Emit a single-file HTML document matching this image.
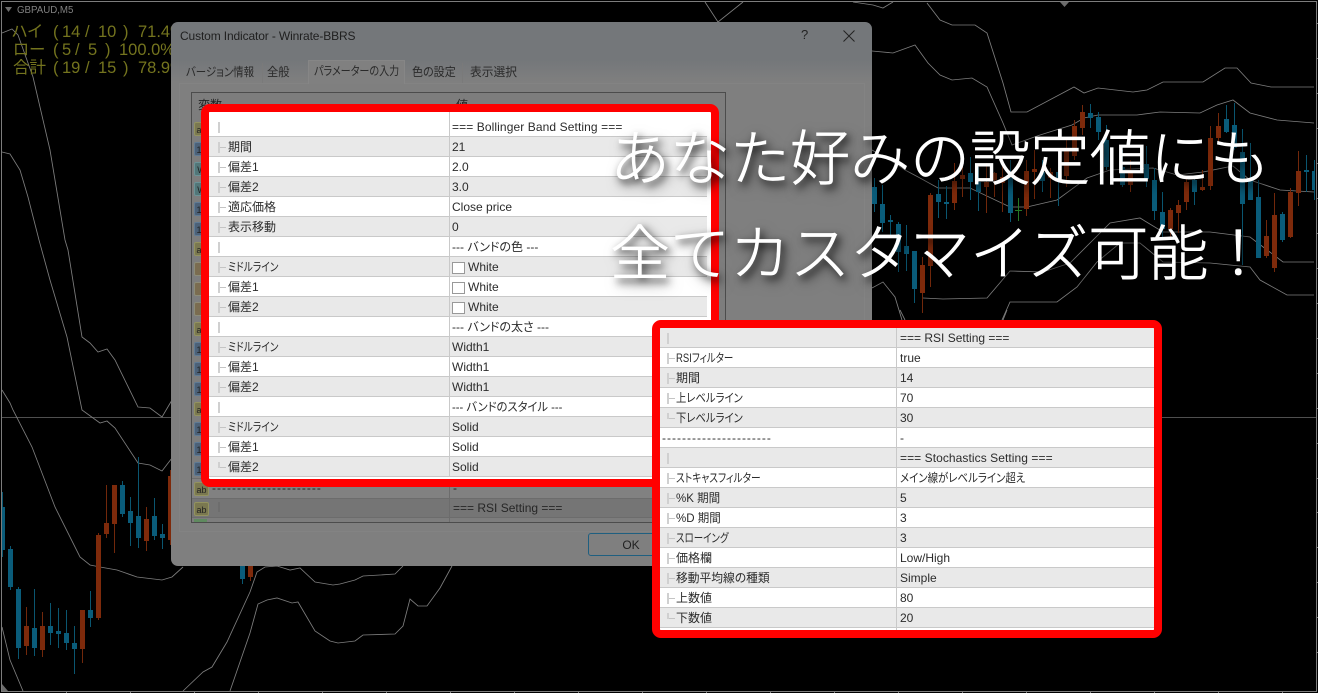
<!DOCTYPE html>
<html lang="ja"><head><meta charset="utf-8"><title>Winrate-BBRS</title>
<style>
html,body{margin:0;padding:0;background:#000;}
body{width:1318px;height:693px;position:relative;overflow:hidden;font-family:"Liberation Sans","Noto Sans CJK JP",sans-serif;font-feature-settings:"palt";}
svg{position:absolute;left:0;top:0;}
.a{position:absolute;white-space:nowrap;}
#dlg{position:absolute;left:171px;top:22px;width:701px;height:544px;border-radius:7px;background:linear-gradient(#74777a 0,#74777a 38px,#7f7f7f 60px);overflow:hidden;}
#panel{position:absolute;left:8px;top:61px;width:686px;height:449px;background:#7f7f7f;border:1px solid #838383;box-sizing:border-box;}
.tab{position:absolute;top:42px;font-size:12px;line-height:16px;color:#2a2a2a;white-space:nowrap;transform-origin:0 0;}
#atab{position:absolute;left:137px;top:38px;width:97px;height:24px;background:#808080;border:1px solid #868686;border-bottom:0;box-sizing:border-box;}
#tbl{position:absolute;left:20px;top:70px;width:535px;height:431px;background:#7d7d7d;border:1px solid #4c4c4c;box-sizing:border-box;overflow:hidden;}
.ic{position:absolute;left:2px;width:15px;height:14px;border-radius:2px;font-size:9px;line-height:14px;text-align:center;color:#222;box-sizing:border-box;}
.ab{background:#7a7850;border:1px solid #92925e;}
.n{background:#4c6178;border:1px solid #5f7a94;}
.w{background:#527678;border:1px solid #6a9296;}
.c{background:#7a6c50;border:1px solid #8c8c78;}
.box{position:absolute;background:#fff;border:8px solid #f00;border-radius:9px;box-sizing:border-box;overflow:hidden;}
.r{position:relative;height:20px;box-sizing:border-box;border-bottom:1px solid #c9c9c9;background:#fff;font-size:12px;line-height:21px;color:#2b2b2b;}
.g{background:#e9e9e9;}
.r b{font-weight:400;position:absolute;top:0;white-space:nowrap;transform-origin:0 0;}
.r i{position:absolute;top:0;bottom:-1px;width:1px;background:#c9c9c9;}
.r u{position:absolute;top:5px;height:11px;width:2px;background:#d0d0d0;}
.r s{position:absolute;top:10px;height:1px;width:6px;background:#c4c4c4;}
.r em{position:absolute;top:5px;width:13px;height:12px;background:#fff;border:1px solid #999;box-sizing:border-box;}
#b1 .r{width:498px;}
#b1 i{left:240px;}
#b1 .v{left:243px;}
#b1 .l{left:19px;}
#b1 u{left:9px;}
#b1 s{left:11px;}
#b2 i{left:236px;}
#b2 .v{left:240px;}
#b2 .l{left:16px;}
#b2 u{left:7px;}
#b2 s{left:9px;}
.big{position:absolute;left:610px;color:#fff;font-size:60px;line-height:70px;font-weight:300;white-space:nowrap;font-feature-settings:"palt" 0;-webkit-text-stroke:.7px #fff;text-shadow:3px 4px 8px rgba(0,0,0,.85),4px 6px 14px rgba(0,0,0,.55);font-family:"Noto Sans CJK JP",sans-serif;}
</style></head><body>

<svg width="1318" height="693" viewBox="0 0 1318 693">
<rect x="1.5" y="1.5" width="1315" height="690" fill="none" stroke="#7c7c7c"/>
<path d="M2 417.500H1316" stroke="#4f4f4f"/>
<path d="M1316 338.500h2M1316 373.500h2M1316 408.500h2M1316 443.500h2M1316 478.500h2M1316 512.500h2M1316 547.500h2M1316 582.500h2M1316 617.500h2M1316 652.500h2M1316 303.500h2M1316 268.500h2M1316 233.500h2M1316 198.500h2M1316 163.500h2M1316 128.500h2M1316 93.500h2M1316 58.500h2M1316 23.500h2M194.500 691v2M258.500 691v2M322.500 691v2M386.500 691v2M450.500 691v2M514.500 691v2M578.500 691v2M642.500 691v2M706.500 691v2M770.500 691v2M834.500 691v2M898.500 691v2M962.500 691v2M1026.500 691v2M1090.500 691v2M1154.500 691v2M1218.500 691v2M1282.500 691v2M66.500 691v2M130.500 691v2" stroke="#7c7c7c" fill="none"/>
<path d="M2 684l6 7H2zM1060 2h9l-4.500 5zM5 7h7l-3.500 5z" fill="#6c6c6c"/>

<g fill="none" stroke="#7e7e7e" stroke-width=".85">
<polyline points="2,33 12,29 18,35 33,77 50,150 65,240 68,250 82,337 90,343 98,352 107,349 115,360 138,407 150,408 162,417 172,400"/>
<polyline points="2,152 10,154 20,170 28,197 39,240 50,280 67,337 82,410 100,423 107,421 115,428 138,463 150,465 162,471 172,458"/>
<polyline points="2,390 10,403 13,410 32,447 55,507 80,557 90,565 100,567 117,570 137,577 162,580 172,577 183,567"/>
<polyline points="2,627 10,660 23,691"/>
<polyline points="183,691 203,672 212,667 227,642 250,592 257,572 265,567 277,566 290,570 300,568 315,582 333,585 340,584 355,580 363,576 380,575 395,574 403,566"/>
<polyline points="230,691 250,633 258,604 267,600 277,598 292,603 298,602 315,631 330,641 338,643 355,641 363,635 395,634 403,626 410,599 418,606 427,606 440,588 452,566"/>
<polyline points="705,2 718,22 743,2"/>
<polyline points="853,2 873,5 883,8 893,2"/>
<polyline points="927,3 940,20 952,25 975,25 987,33 1003,83 1011,112 1027,112 1074,87 1084,93 1098,88 1133,92 1147,90 1163,82 1203,82 1225,68 1237,68 1251,83 1271,87 1314,87"/>
<polyline points="872,51 893,53 915,45 928,63 940,75 952,80 972,78 987,87 1003,123 1012,145 1040,135 1072,125 1084,118 1098,115 1137,115 1160,112 1200,113 1217,105 1233,100 1250,113 1277,120 1314,123"/>
<polyline points="872,150 890,160 905,170 920,178 938,188 970,188 1010,207 1027,207 1057,200 1087,178 1110,170 1153,168 1177,175 1203,172 1233,166 1250,180 1280,190 1314,192"/>
<polyline points="923,298 943,299 987,298 1010,271 1043,272 1070,263 1103,230 1110,223 1140,218 1163,232 1210,232 1250,237 1283,262 1314,262"/>
<polyline points="1002,320 1010,302 1057,302 1077,287 1097,262 1120,243 1140,243 1163,262 1210,263 1250,267 1260,280 1287,295 1314,295"/>
<polyline points="872,288 883,282 895,297 902,320"/>
<polyline points="1003,320 1007,310"/>
<polyline points="900,310 905,320"/>
</g>

<path stroke="#0a5670" fill="none" d="M2.500 492V557M10.500 546V590M18.500 587V659M34.500 589V656M50.500 603V645M58.500 608V648M66.500 610V650M74.500 626V674M90.500 591V627M122.500 481V517M130.500 497V546M138.500 457V548M154.500 498V540M162.500 524V549M242.500 560V584M874.500 178V212M882.500 185V232M890.500 215V237M898.500 222V272M906.500 225V271M914.500 251V303M938.500 180V218M946.500 186V219M970.500 157V200M978.500 167V211M1010.500 160V222M1042.500 160V192M1058.500 167V206M1090.500 104V128M1098.500 112V140M1106.500 125V170M1122.500 150V187M1146.500 146V187M1154.500 168V220M1162.500 192V237M1194.500 178V205M1226.500 105V133M1234.500 103V150M1242.500 129V265M1250.500 143V200M1258.500 180V258M1282.500 212V242M1306.500 155V192M1314.500 160V200"/>
<path fill="#0a5c7a" d="M2 507h3v43h-3zM8 549h5v38h-5zM16 589h5v59h-5zM32 628h5v20h-5zM48 626h5v7h-5zM56 631h5v3h-5zM64 633h5v10h-5zM72 643h5v6h-5zM88 610h5v8h-5zM120 485h5v29h-5zM128 511h5v12h-5zM136 516h5v22h-5zM152 516h5v20h-5zM160 534h5v4h-5zM240 560h5v19h-5zM872 187h5v17h-5zM880 204h5v19h-5zM888 220h5v2h-5zM896 224h5v28h-5zM904 246h5v8h-5zM912 251h5v38h-5zM936 194h5v8h-5zM944 202h5v2h-5zM968 173h5v9h-5zM976 182h5v10h-5zM1008 178h5v35h-5zM1040 172h5v9h-5zM1056 172h5v6h-5zM1088 113h5v5h-5zM1096 117h5v15h-5zM1104 140h5v27h-5zM1120 167h5v18h-5zM1144 164h5v15h-5zM1152 180h5v31h-5zM1160 212h5v17h-5zM1192 180h5v12h-5zM1224 119h5v13h-5zM1232 125h5v23h-5zM1240 152h5v52h-5zM1248 180h5v20h-5zM1256 197h5v61h-5zM1280 214h5v26h-5zM1304 170h5v2h-5zM1312 171h3v19h-3z"/>
<path stroke="#72280b" fill="none" d="M26.500 607V655M42.500 612V657M82.500 610V663M98.500 533V620M106.500 485V538M114.500 485V553M146.500 507V551M170.500 470V545M250.500 560V581M922.500 257V313M930.500 193V287M954.500 163V210M962.500 158V197M986.500 163V213M994.500 172V197M1002.500 162V212M1026.500 160V216M1034.500 150V199M1050.500 168V198M1066.500 140V187M1074.500 120V160M1082.500 105V135M1130.500 160V192M1170.500 208V240M1178.500 200V233M1186.500 178V210M1202.500 170V191M1210.500 126V190M1218.500 113V143M1266.500 220V258M1274.500 193V272M1290.500 188V238M1298.500 151V206"/>
<path fill="#7e2a0b" d="M24 626h5v20h-5zM40 626h5v24h-5zM80 610h5v39h-5zM96 535h5v83h-5zM104 523h5v11h-5zM112 485h5v39h-5zM144 519h5v22h-5zM168 476h5v64h-5zM248 560h5v17h-5zM920 265h5v28h-5zM928 195h5v71h-5zM952 181h5v22h-5zM960 175h5v4h-5zM984 182h5v5h-5zM992 173h5v7h-5zM1000 177h5v6h-5zM1024 171h5v38h-5zM1032 169h5v3h-5zM1048 172h5v6h-5zM1064 150h5v26h-5zM1072 126h5v30h-5zM1080 112h5v16h-5zM1128 173h5v12h-5zM1168 210h5v19h-5zM1176 205h5v8h-5zM1184 182h5v20h-5zM1200 187h5v3h-5zM1208 138h5v48h-5zM1216 126h5v12h-5zM1264 236h5v20h-5zM1272 215h5v53h-5zM1288 192h5v45h-5zM1296 171h5v22h-5z"/>
<path stroke="#257a25" fill="none" d="M1018.500 198V221M1015 210.500h7"/>

<text x="17" y="13" font-size="9.700" fill="#808080" font-family="Liberation Sans">GBPAUD,M5</text>
<g font-size="16.500" fill="#74741e" font-family="Liberation Sans,Noto Sans CJK JP,sans-serif" style="font-feature-settings:'palt'">
<text x="12" y="37">ハイ</text><text x="53" y="37">(</text><text x="62" y="37">14</text><text x="85" y="37">/</text><text x="98" y="37">10</text><text x="123" y="37">)</text><text x="138" y="37">71.4%</text>
<text x="13" y="55">ロー</text><text x="53" y="55">(</text><text x="62" y="55">5</text><text x="75" y="55">/</text><text x="88" y="55">5</text><text x="105" y="55">)</text><text x="119" y="55">100.0%</text>
<text x="13" y="73">合計</text><text x="53" y="73">(</text><text x="62" y="73">19</text><text x="85" y="73">/</text><text x="98" y="73">15</text><text x="123" y="73">)</text><text x="138" y="73">78.9%</text>
</g>
</svg>

<div id="dlg">
<div class="a" style="left:9px;top:7px;font-size:12px;line-height:15px;color:#1f1f1f;letter-spacing:-.13px;">Custom Indicator - Winrate-BBRS</div>
<div class="a" style="left:630px;top:5px;font-size:13px;line-height:16px;color:#222;">?</div>
<svg style="left:671px;top:7px" width="14" height="14"><path d="M1.500 1.500L12.500 12.500M12.500 1.500L1.500 12.500" stroke="#222" stroke-width="1" fill="none"/></svg>
<div id="panel"></div>
<div id="atab"></div>
<div class="tab" style="left:15px;transform:scaleX(.87)">バージョン情報</div>
<div class="tab" style="left:96px;transform:scaleX(.94)">全般</div>
<div class="tab" style="left:143px;top:41px;transform:scaleX(.84)">パラメーターの入力</div>
<div class="tab" style="left:241px;transform:scaleX(.92)">色の設定</div>
<div class="tab" style="left:299px;transform:scaleX(.98)">表示選択</div>
<div class="a" style="left:91px;top:41px;width:1px;height:20px;background:#7a7a7a"></div>
<div class="a" style="left:291px;top:41px;width:1px;height:20px;background:#7a7a7a"></div>
<div id="tbl">
<div class="a" style="left:6px;top:4px;font-size:12px;line-height:16px;color:#222;">変数</div>
<div class="a" style="left:264px;top:4px;font-size:12px;line-height:16px;color:#222;">値</div>
<div class="a" style="left:0;top:385px;width:533px;height:20px;background:#818181;border-top:1px solid #6c6c6c;box-sizing:border-box;"></div>
<div class="a" style="left:0;top:405px;width:533px;height:20px;background:#757575;border-top:1px solid #6c6c6c;border-bottom:1px solid #6c6c6c;box-sizing:border-box;"></div>
<div class="a" style="left:257px;top:385px;width:1px;height:45px;background:#6c6c6c;"></div>
<div class="a" style="left:20px;top:387px;font-size:12px;line-height:16px;color:#222;letter-spacing:1px;">----------------------</div>
<div class="a" style="left:261px;top:387px;font-size:12px;line-height:16px;color:#222;">-</div>
<div class="a" style="left:261px;top:407px;font-size:12px;line-height:16px;color:#262626;">=== RSI Setting ===</div>
<div class="a" style="left:26px;top:409px;width:2px;height:10px;background:#6d6d6d;"></div>
<div class="ic ab" style="top:29px">ab</div>
<div class="ic n" style="top:49px">12</div>
<div class="ic w" style="top:69px">W</div>
<div class="ic w" style="top:89px">W</div>
<div class="ic n" style="top:109px">12</div>
<div class="ic n" style="top:129px">12</div>
<div class="ic ab" style="top:149px">ab</div>
<div class="ic c" style="top:169px"></div>
<div class="ic c" style="top:189px"></div>
<div class="ic c" style="top:209px"></div>
<div class="ic ab" style="top:229px">ab</div>
<div class="ic n" style="top:249px">12</div>
<div class="ic n" style="top:269px">12</div>
<div class="ic n" style="top:289px">12</div>
<div class="ic ab" style="top:309px">ab</div>
<div class="ic n" style="top:329px">12</div>
<div class="ic n" style="top:349px">12</div>
<div class="ic n" style="top:369px">12</div>
<div class="ic ab" style="top:389px">ab</div>
<div class="ic ab" style="top:409px">ab</div>
<div class="a" style="left:2px;top:426px;width:13px;height:3px;background:#5f8a5f;"></div>
</div>
<div class="a" style="left:417px;top:511px;width:86px;height:23px;border:1px solid #1f5f80;border-radius:3px;box-sizing:border-box;background:#7f7f7f;text-align:center;font-size:12px;line-height:22px;color:#222;">OK</div>
</div>

<div class="box" id="b1" style="left:201px;top:104px;width:518px;height:383px;">
<div class="r" style="height:25px;line-height:31px;"><i></i><u style="top:10px"></u><b class="v" style="letter-spacing:.1px">=== Bollinger Band Setting ===</b></div>
<div class="r g"><i></i><u></u><s></s><b class="l">期間</b><b class="v">21</b></div>
<div class="r"><i></i><u></u><s></s><b class="l">偏差1</b><b class="v">2.0</b></div>
<div class="r g"><i></i><u></u><s></s><b class="l">偏差2</b><b class="v">3.0</b></div>
<div class="r"><i></i><u></u><s></s><b class="l">適応価格</b><b class="v">Close price</b></div>
<div class="r g"><i></i><u></u><s></s><b class="l">表示移動</b><b class="v">0</b></div>
<div class="r"><i></i><u></u><b class="v">--- バンドの色 ---</b></div>
<div class="r g"><i></i><u></u><s></s><b class="l" style="transform:scaleX(.81)">ミドルライン</b><em style="left:243px"></em><b style="left:259px">White</b></div>
<div class="r"><i></i><u></u><s></s><b class="l">偏差1</b><em style="left:243px"></em><b style="left:259px">White</b></div>
<div class="r g"><i></i><u></u><s></s><b class="l">偏差2</b><em style="left:243px"></em><b style="left:259px">White</b></div>
<div class="r"><i></i><u></u><b class="v">--- バンドの太さ ---</b></div>
<div class="r g"><i></i><u></u><s></s><b class="l" style="transform:scaleX(.81)">ミドルライン</b><b class="v">Width1</b></div>
<div class="r"><i></i><u></u><s></s><b class="l">偏差1</b><b class="v">Width1</b></div>
<div class="r g"><i></i><u></u><s></s><b class="l">偏差2</b><b class="v">Width1</b></div>
<div class="r"><i></i><u></u><b class="v" style="transform:scaleX(.94)">--- バンドのスタイル ---</b></div>
<div class="r g"><i></i><u></u><s></s><b class="l" style="transform:scaleX(.81)">ミドルライン</b><b class="v">Solid</b></div>
<div class="r"><i></i><u></u><s></s><b class="l">偏差1</b><b class="v">Solid</b></div>
<div class="r g"><i></i><u style="height:6px"></u><s></s><b class="l">偏差2</b><b class="v">Solid</b></div>
</div>

<div class="box" id="b2" style="left:652px;top:320px;width:510px;height:318px;">
<div class="r g"><i></i><u></u><b class="v">=== RSI Setting ===</b></div>
<div class="r"><i></i><u></u><s></s><b class="l" style="transform:scaleX(.79)">RSIフィルター</b><b class="v">true</b></div>
<div class="r g"><i></i><u></u><s></s><b class="l">期間</b><b class="v">14</b></div>
<div class="r"><i></i><u></u><s></s><b class="l" style="transform:scaleX(.86)">上レベルライン</b><b class="v">70</b></div>
<div class="r g"><i></i><u style="height:6px"></u><s></s><b class="l" style="transform:scaleX(.86)">下レベルライン</b><b class="v">30</b></div>
<div class="r"><i></i><b style="left:2px;letter-spacing:1px">----------------------</b><b class="v">-</b></div>
<div class="r g"><i></i><u></u><b class="v" style="letter-spacing:.07px">=== Stochastics Setting ===</b></div>
<div class="r"><i></i><u></u><s></s><b class="l" style="transform:scaleX(.81)">ストキャスフィルター</b><b class="v" style="transform:scaleX(.87)">メイン線がレベルライン超え</b></div>
<div class="r g"><i></i><u></u><s></s><b class="l" style="transform:scaleX(.96)">%K 期間</b><b class="v">5</b></div>
<div class="r"><i></i><u></u><s></s><b class="l" style="transform:scaleX(.96)">%D 期間</b><b class="v">3</b></div>
<div class="r g"><i></i><u></u><s></s><b class="l" style="transform:scaleX(.79)">スローイング</b><b class="v">3</b></div>
<div class="r"><i></i><u></u><s></s><b class="l">価格欄</b><b class="v">Low/High</b></div>
<div class="r g"><i></i><u></u><s></s><b class="l" style="transform:scaleX(.98)">移動平均線の種類</b><b class="v">Simple</b></div>
<div class="r"><i></i><u></u><s></s><b class="l">上数値</b><b class="v">80</b></div>
<div class="r g"><i></i><u style="height:6px"></u><s></s><b class="l">下数値</b><b class="v">20</b></div>
<div class="r" style="height:3px;border:0;"><i></i></div>
</div>

<div class="big" style="top:120px;">あなた好みの設定値にも</div>
<div class="big" style="top:215px;">全てカスタマイズ可能！</div>
</body></html>
